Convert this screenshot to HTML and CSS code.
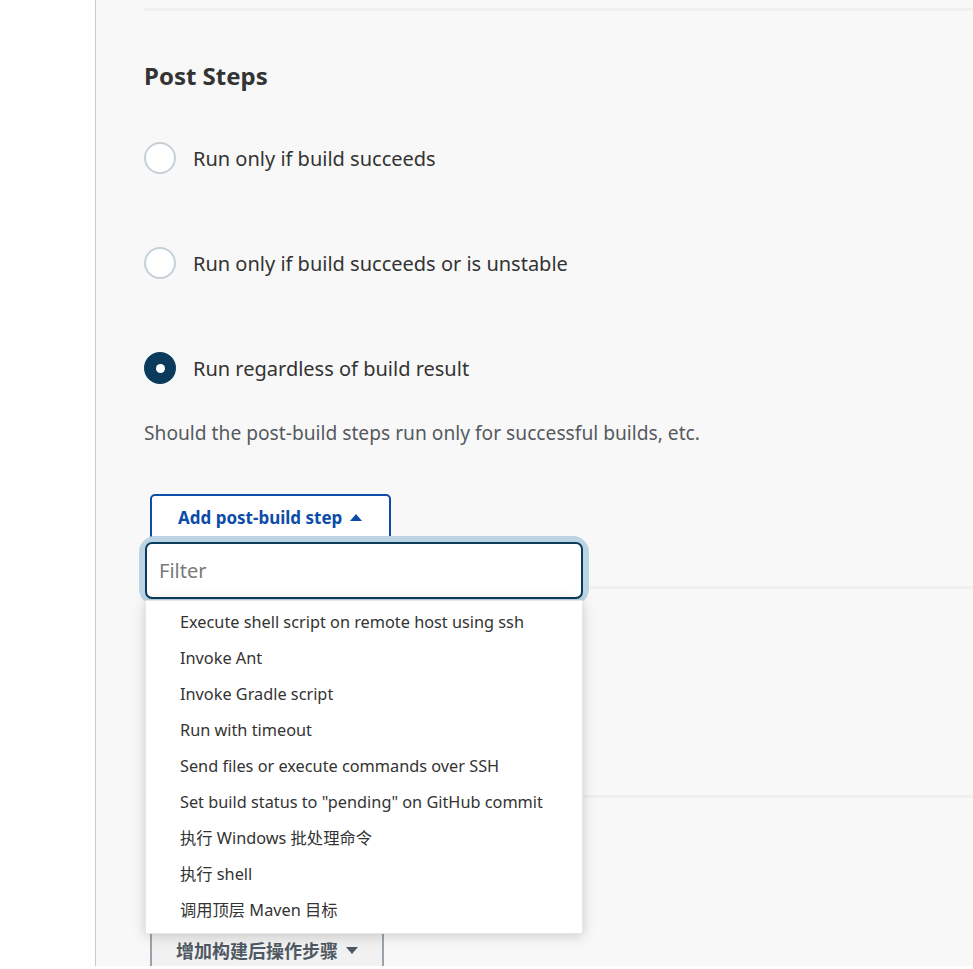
FILE: index.html
```html
<!DOCTYPE html>
<html lang="en">
<head>
<meta charset="utf-8">
<title>Post Steps</title>
<link rel="stylesheet" href="styles.css">
</head>
<body>
<div class="page">
  <aside class="sidebar"></aside>
  <main class="main">
    <div class="divider divider-top"></div>
    <section class="section section-post">
      <h2 class="heading">Post Steps</h2>
      <div class="radios">
        <label class="radio-row"><span class="radio"></span><span class="radio-label">Run only if build succeeds</span></label>
        <label class="radio-row"><span class="radio"></span><span class="radio-label">Run only if build succeeds or is unstable</span></label>
        <label class="radio-row"><span class="radio radio-checked"></span><span class="radio-label">Run regardless of build result</span></label>
      </div>
      <p class="desc">Should the post-build steps run only for successful builds, etc.</p>
      <div class="add-wrap">
        <button class="add-btn">Add post-build step <span class="caret-up"></span></button>
        <div class="popup">
          <div class="filter-ring"><div class="filter">Filter</div></div>
          <ul class="menu">
            <li>Execute shell script on remote host using ssh</li>
            <li>Invoke Ant</li>
            <li>Invoke Gradle script</li>
            <li>Run with timeout</li>
            <li>Send files or execute commands over SSH</li>
            <li>Set build status to "pending" on GitHub commit</li>
            <li>执行 Windows 批处理命令</li>
            <li>执行 shell</li>
            <li>调用顶层 Maven 目标</li>
          </ul>
        </div>
      </div>
    </section>
    <div class="divider divider-mid"></div>
    <section class="section section-hidden"></section>
    <div class="divider divider-low"></div>
    <section class="section section-actions">
      <button class="post-btn">增加构建后操作步骤 <span class="caret-down"></span></button>
    </section>
  </main>
</div>
</body>
</html>
```

FILE: styles.css
```css
* { box-sizing: border-box; }
html, body { margin: 0; padding: 0; background: #ffffff; }
body {
  font-family: "Noto Sans", "Noto Sans CJK SC", sans-serif;
  color: #333333;
  width: 973px;
  height: 969px;
  overflow: hidden;
}
.page {
  display: flex;
  height: 966px;
}
.sidebar {
  width: 96px;
  flex: none;
  background: #ffffff;
  border-right: 1px solid #c5cacf;
}
.main {
  flex: 1;
  background: #f8f8f8;
  padding-left: 48px;
  overflow: hidden;
}
.divider {
  height: 3px;
  background: #efefef;
}
.divider-top { margin-top: 8px; }
.section-post { padding-bottom: 45px; }
.heading {
  margin: 49px 0 0 0;
  font-size: 24px;
  line-height: 32px;
  font-weight: 700;
  color: #333333;
}
.radios {
  display: flex;
  flex-direction: column;
  gap: 73px;
  margin-top: 50px;
}
.radio-row {
  display: flex;
  align-items: center;
  gap: 17px;
  height: 32px;
}
.radio {
  width: 32px;
  height: 32px;
  border-radius: 50%;
  border: 2px solid #c5d0d7;
  background: #ffffff;
  flex: none;
  display: flex;
  align-items: center;
  justify-content: center;
}
.radio-checked {
  background: #0b3a5c;
  border-color: #0b3a5c;
}
.radio-checked::after {
  content: "";
  width: 9px;
  height: 9px;
  border-radius: 50%;
  background: #ffffff;
}
.radio-label {
  font-size: 20px;
  color: #333333;
}
.desc {
  margin: 35px 0 0 0;
  font-size: 19.2px;
  line-height: 28px;
  color: #555a60;
}
.add-wrap {
  position: relative;
  margin: 47px 0 0 6px;
  height: 47px;
}
.add-btn {
  height: 47px;
  width: 241px;
  border: 2px solid #0d4ca8;
  border-radius: 5px;
  background: #ffffff;
  color: #0c4ca8;
  font-family: inherit;
  font-size: 17px;
  font-weight: 700;
  padding: 0 0 0 26px;
  text-align: left;
  display: flex;
  align-items: center;
  gap: 8px;
}
.caret-up {
  width: 0;
  height: 0;
  border-left: 6px solid transparent;
  border-right: 6px solid transparent;
  border-bottom: 7px solid #0c4ca8;
}
.popup {
  position: absolute;
  left: -5px;
  top: 48px;
  width: 438px;
  z-index: 5;
}
.filter-ring {
  border-radius: 10px;
  box-shadow: 0 0 0 6px #bcd5e4;
  background: #bcd5e4;
}
.filter {
  height: 57px;
  border: 2px solid #0c3c5c;
  border-radius: 7px;
  background: #ffffff;
  font-size: 20px;
  color: #7a7a7a;
  display: flex;
  align-items: center;
  padding-left: 12px;
}
.menu {
  list-style: none;
  margin: 1px 0 0 0;
  padding: 4px 0 4px 0;
  background: #ffffff;
  box-shadow: 0 2px 12px rgba(0, 0, 0, 0.18);
  border: 1px solid #e6e6e6;
}
.menu li {
  height: 36px;
  line-height: 34px;
  padding-left: 34px;
  font-size: 16.3px;
  color: #333333;
  white-space: nowrap;
}
.section-hidden { height: 206px; }
.section-actions {
  padding-top: 130px;
}
.post-btn {
  margin-left: 6px;
  width: 234px;
  height: 44px;
  border: none;
  border-left: 2px solid #9aa3ab;
  border-right: 2px solid #9aa3ab;
  background: #f1f1f1;
  color: #4f5963;
  font-family: "Noto Sans", "Noto Sans CJK SC", sans-serif;
  font-size: 18px;
  font-weight: 700;
  padding: 0 0 0 24px;
  text-align: left;
  display: flex;
  align-items: center;
  gap: 8px;
}
.caret-down {
  width: 0;
  height: 0;
  border-left: 6px solid transparent;
  border-right: 6px solid transparent;
  border-top: 7px solid #4f5963;
}
```
